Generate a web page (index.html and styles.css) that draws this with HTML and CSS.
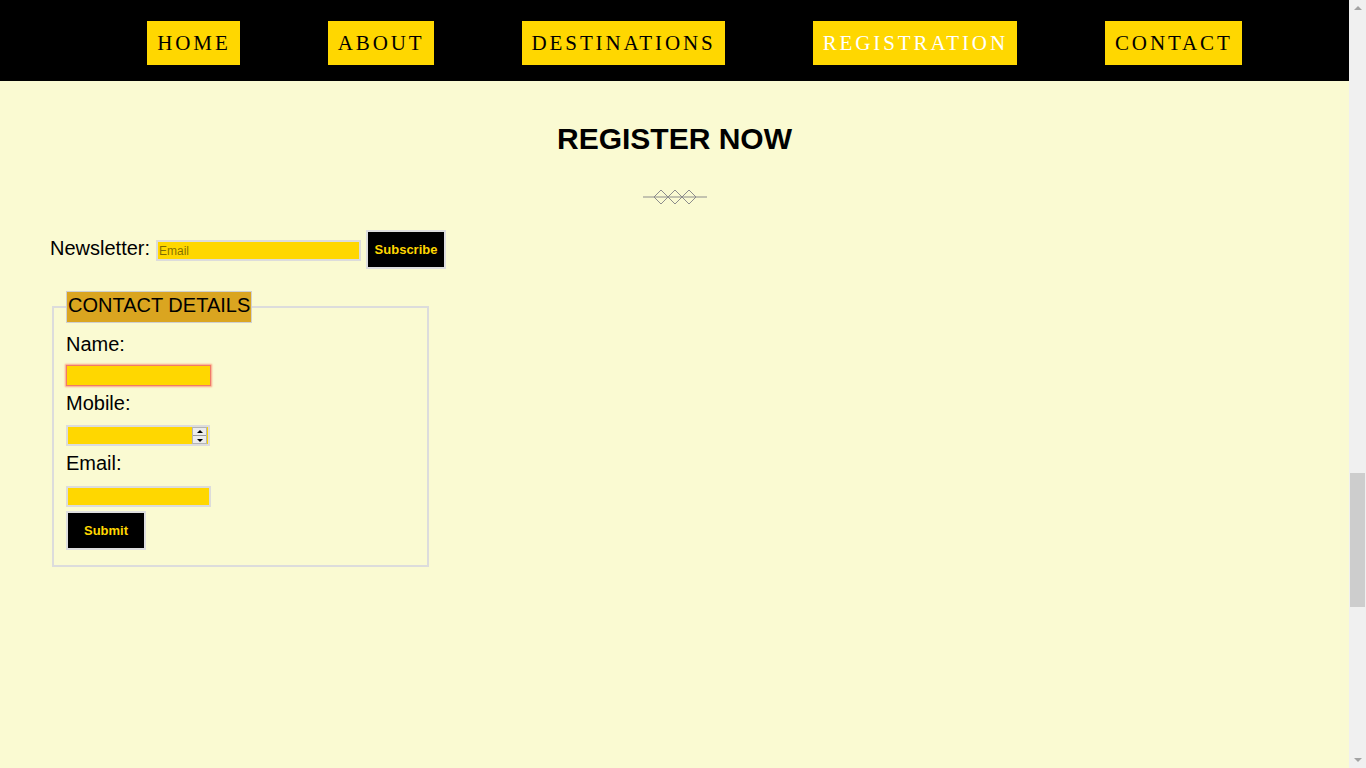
FILE: index.html
```html
<!DOCTYPE html>
<html lang="en">
<head>
<meta charset="utf-8">
<title>Register Now</title>
<link rel="stylesheet" href="styles.css">
</head>
<body>
<nav class="topnav">
  <ul class="menu">
    <li><a class="menu-link" href="#">HOME</a></li>
    <li><a class="menu-link" href="#">ABOUT</a></li>
    <li><a class="menu-link" href="#">DESTINATIONS</a></li>
    <li><a class="menu-link active" href="#">REGISTRATION</a></li>
    <li><a class="menu-link" href="#">CONTACT</a></li>
  </ul>
</nav>

<section class="register" id="registration">
  <h2 class="register-title">REGISTER NOW</h2>
  <svg class="divider" width="64" height="16" viewBox="0 0 64 16" aria-hidden="true">
    <line x1="0" y1="8" x2="64" y2="8" stroke="#8c8c8c" stroke-width="1.2"/>
    <path d="M11 8 L18 1 L25 8 L18 15 Z M25 8 L32 1 L39 8 L32 15 Z M39 8 L46 1 L53 8 L46 15 Z" fill="none" stroke="#8c8c8c" stroke-width="1"/>
  </svg>

  <form class="newsletter">
    <label class="newsletter-label" for="nl-email">Newsletter:</label>
    <input class="newsletter-input" id="nl-email" type="email" placeholder="Email">
    <button class="dark-btn" type="button">Subscribe</button>
  </form>

  <fieldset class="contact">
    <legend class="contact-legend">CONTACT DETAILS</legend>
    <label class="field-label" for="f-name">Name:</label>
    <input class="field-input invalid" id="f-name" type="text">
    <label class="field-label" for="f-mobile">Mobile:</label>
    <div class="num-field">
      <input class="num-input" id="f-mobile" type="text" inputmode="numeric">
      <span class="spin"><span class="spin-up"></span><span class="spin-down"></span></span>
    </div>
    <label class="field-label" for="f-email">Email:</label>
    <input class="field-input" id="f-email" type="email">
    <button class="dark-btn submit-btn" type="button">Submit</button>
  </fieldset>
</section>

<div class="scrollbar" aria-hidden="true">
  <span class="scroll-arrow up"></span>
  <span class="scroll-thumb"></span>
  <span class="scroll-arrow down"></span>
</div>
</body>
</html>
```

FILE: styles.css
```css
html, body {
  margin: 0;
  padding: 0;
}
body {
  margin-right: 17px;
  min-height: 768px;
  background: #fafad2;
  color: #000;
  font-family: "Liberation Sans", Arial, sans-serif;
}

.topnav {
  height: 81px;
  background: #000;
}
.menu {
  list-style: none;
  margin: 0;
  padding: 21px 0 0 40px;
  display: flex;
  justify-content: center;
  gap: 88px;
}
.menu-link {
  display: block;
  height: 44px;
  line-height: 45px;
  padding: 0 9px 0 10px;
  background: #ffd700;
  color: #000;
  text-decoration: none;
  font-family: "Liberation Serif", "Times New Roman", serif;
  font-size: 21px;
  letter-spacing: 2.9px;
}
.menu-link.active {
  color: #fff;
}

.register {
  padding: 41px 50px 0;
}
.register-title {
  margin: 0;
  text-align: center;
  font-size: 30px;
  line-height: 34px;
  font-weight: bold;
}
.divider {
  display: block;
  margin: 33px auto 0;
}

.newsletter {
  display: flex;
  align-items: flex-start;
  margin-top: 25px;
}
.newsletter-label {
  font-size: 20px;
  line-height: 23px;
  margin-top: 7px;
  margin-right: 6px;
}
.newsletter-input {
  box-sizing: border-box;
  width: 205px;
  height: 21px;
  margin: 10px 5px 0 0;
  padding: 1px 1px;
  border: 2px solid #dcdcdc;
  background: #ffd700;
  font-family: "Liberation Sans", Arial, sans-serif;
  font-size: 12px;
}
.newsletter-input::placeholder {
  color: rgba(0, 0, 0, 0.5);
}

.dark-btn {
  box-sizing: border-box;
  width: 80px;
  height: 39px;
  padding: 0;
  border: 2px solid #dedede;
  background: #000;
  color: #ffd700;
  font-family: "Liberation Sans", Arial, sans-serif;
  font-size: 13px;
  font-weight: bold;
}

.contact {
  box-sizing: border-box;
  width: 377px;
  margin: 22px 0 0 2px;
  padding: 10px 12px 15px;
  border: 2px solid #dcdcdc;
  display: flex;
  flex-direction: column;
  align-items: flex-start;
}
.contact-legend {
  padding: 2px 1px 5px;
  border: 1px solid #cfcfcf;
  background: #daa520;
  font-size: 20px;
  line-height: 23px;
}
.field-label {
  display: block;
  font-size: 20px;
  line-height: 23px;
}
.field-input {
  box-sizing: border-box;
  display: block;
  width: 145px;
  height: 21px;
  padding: 1px;
  border: 2px solid #dcdcdc;
  background: #ffd700;
}
.field-input.invalid {
  border: 1px solid #f07a6a;
  box-shadow: 0 0 1.5px 1px rgba(255, 60, 40, 0.45);
}
#f-name {
  margin: 9px 0 6px;
}
.num-field {
  box-sizing: border-box;
  display: flex;
  align-items: center;
  width: 144px;
  height: 21px;
  margin: 10px 0 6px;
  border: 2px solid #dcdcdc;
  background: #ffd700;
}
.num-input {
  flex: 1;
  min-width: 0;
  height: 100%;
  border: 0;
  padding: 0 2px;
  background: transparent;
}
.spin {
  box-sizing: border-box;
  width: 15px;
  height: 17px;
  margin-right: 1px;
  display: flex;
  flex-direction: column;
  border: 1px solid #b4b4b4;
  background: #ececec;
}
.spin-up, .spin-down {
  flex: 1;
  position: relative;
}
.spin-up {
  border-bottom: 1px solid #9a9a9a;
}
.spin-up::after, .spin-down::after {
  content: "";
  position: absolute;
  left: 50%;
  top: 50%;
  margin-left: -3px;
  border-left: 3px solid transparent;
  border-right: 3px solid transparent;
}
.spin-up::after {
  margin-top: -2px;
  border-bottom: 3px solid #000;
}
.spin-down::after {
  margin-top: -1px;
  border-top: 3px solid #000;
}
#f-email {
  margin: 11px 0 4px;
}

/* window scrollbar (drawn over the right edge) */
.scrollbar {
  position: fixed;
  top: 0;
  right: 0;
  width: 17px;
  height: 768px;
  background: #f0f0f0;
}
.scroll-thumb {
  position: absolute;
  left: 1px;
  top: 473px;
  width: 15px;
  height: 134px;
  background: #cdcdcd;
}
.scroll-arrow {
  position: absolute;
  left: 5px;
  width: 0;
  height: 0;
  border-left: 4px solid transparent;
  border-right: 4px solid transparent;
}
.scroll-arrow.up {
  top: 6px;
  border-bottom: 4px solid #a3a3a3;
}
.scroll-arrow.down {
  bottom: 6px;
  border-top: 4px solid #a3a3a3;
}
```
